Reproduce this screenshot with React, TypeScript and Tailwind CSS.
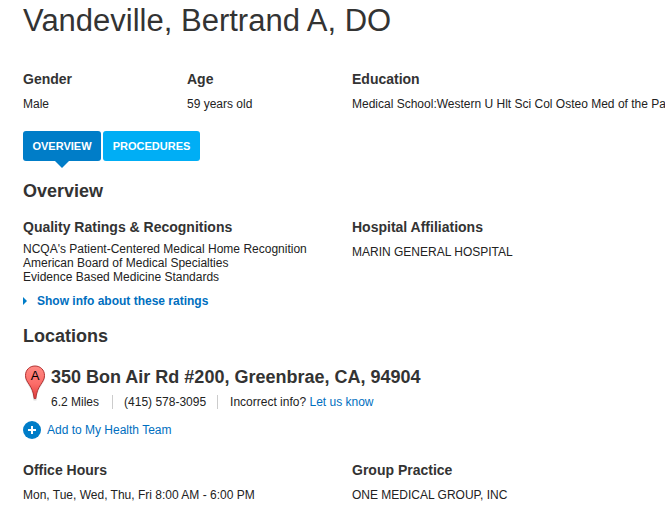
import React from "react";

function Field({ title, children }: { title: string; children: React.ReactNode }) {
  return (
    <section className="min-w-0">
      <h3 className="text-[14px] leading-5 font-bold">{title}</h3>
      <div className="mt-2 text-[12px] leading-[14px] text-[#222]">{children}</div>
    </section>
  );
}

export default function App() {
  return (
    <main className="overflow-hidden bg-white pl-[23px] font-['Liberation_Sans',Arial,sans-serif] text-[#333]">
      <h1 className="text-[31px] leading-[42px] font-normal">Vandeville, Bertrand A, DO</h1>
      <div className="mt-[27px] grid grid-cols-[164px_165px_1fr] whitespace-nowrap">
        <Field title="Gender">Male</Field>
        <Field title="Age">59 years old</Field>
        <Field title="Education">Medical School:Western U Hlt Sci Col Osteo Med of the Pa</Field>
      </div>
      <nav className="mt-5 flex gap-[2px]">
        <button type="button" className="relative h-[30px] w-[78px] rounded-[3px] bg-[#007dc8] text-[11px] font-bold text-white">
          OVERVIEW
          <span className="absolute top-full left-1/2 -translate-x-1/2 border-x-[7px] border-t-[7px] border-x-transparent border-t-[#007dc8]" />
        </button>
        <button type="button" className="h-[30px] w-[97px] rounded-[3px] bg-[#00aef5] text-[11px] font-bold text-white">
          PROCEDURES
        </button>
      </nav>
      <h2 className="mt-[18px] text-[18px] leading-6 font-bold">Overview</h2>
      <div className="mt-[14px] grid grid-cols-[329px_1fr]">
        <section>
          <h3 className="text-[14px] leading-5 font-bold">Quality Ratings &amp; Recognitions</h3>
          <ul className="mt-[5px] text-[12px] leading-[14px] text-[#222]">
            <li>NCQA's Patient-Centered Medical Home Recognition</li>
            <li>American Board of Medical Specialties</li>
            <li>Evidence Based Medicine Standards</li>
          </ul>
        </section>
        <Field title="Hospital Affiliations">MARIN GENERAL HOSPITAL</Field>
      </div>
      <a href="#ratings" className="mt-[10px] flex w-fit items-center gap-[10px] text-[12px] leading-[14px] font-bold text-[#006fc0]">
        <span className="border-y-4 border-l-4 border-y-transparent border-l-[#007dc8]" />
        Show info about these ratings
      </a>
      <h2 className="mt-4 text-[18px] leading-6 font-bold">Locations</h2>
      <div className="mt-[17px] flex gap-[5px]">
        <svg className="h-[37px] w-[23px]" viewBox="0 0 23 37" aria-hidden="true">
          <defs>
            <linearGradient id="pin" x1="0" y1="0" x2="0" y2="1">
              <stop offset="0" stopColor="#ff8a84" />
              <stop offset="0.55" stopColor="#fc6c68" />
              <stop offset="1" stopColor="#e03c3c" />
            </linearGradient>
          </defs>
          <path d="M12 2C6 2 2 6 2 11.500C2 19 9.500 21 10.500 35.500H13.500C14.500 21 22 19 22 11.500C22 6 18 2 12 2Z" fill="#000" opacity="0.14" />
          <path d="M12 1C6.500 1 2.500 5 2.500 10.500C2.500 18 10 20 11.200 33.500H12.800C14 20 21.500 18 21.500 10.500C21.500 5 17.500 1 12 1Z" fill="url(#pin)" stroke="#b33232" />
          <text x="12" y="15" textAnchor="middle" fontSize="13" fill="#000">A</text>
        </svg>
        <div>
          <h3 className="text-[18px] leading-6 font-bold">350 Bon Air Rd #200, Greenbrae, CA, 94904</h3>
          <div className="mt-[6px] flex text-[12px] leading-[14px] text-[#222]">
            <span className="border-r border-[#ccc] pr-[13px]">6.2 Miles</span>
            <span className="border-r border-[#ccc] px-[11px]">(415) 578-3095</span>
            <span className="pl-3">Incorrect info? <a href="#feedback" className="text-[#006fc0]">Let us know</a></span>
          </div>
        </div>
      </div>
      <button type="button" className="mt-3 flex items-center gap-[6px] text-[12px] leading-[14px] text-[#006fc0]">
        <svg className="size-[18px]" viewBox="0 0 18 18" aria-hidden="true">
          <circle cx="9" cy="9" r="9" fill="#007dc8" />
          <path d="M9 5v8M5 9h8" stroke="#fff" strokeWidth="2" />
        </svg>
        Add to My Health Team
      </button>
      <div className="mt-[21px] grid grid-cols-[329px_1fr] pb-3">
        <Field title="Office Hours">Mon, Tue, Wed, Thu, Fri 8:00 AM - 6:00 PM</Field>
        <Field title="Group Practice">ONE MEDICAL GROUP, INC</Field>
      </div>
    </main>
  );
}
